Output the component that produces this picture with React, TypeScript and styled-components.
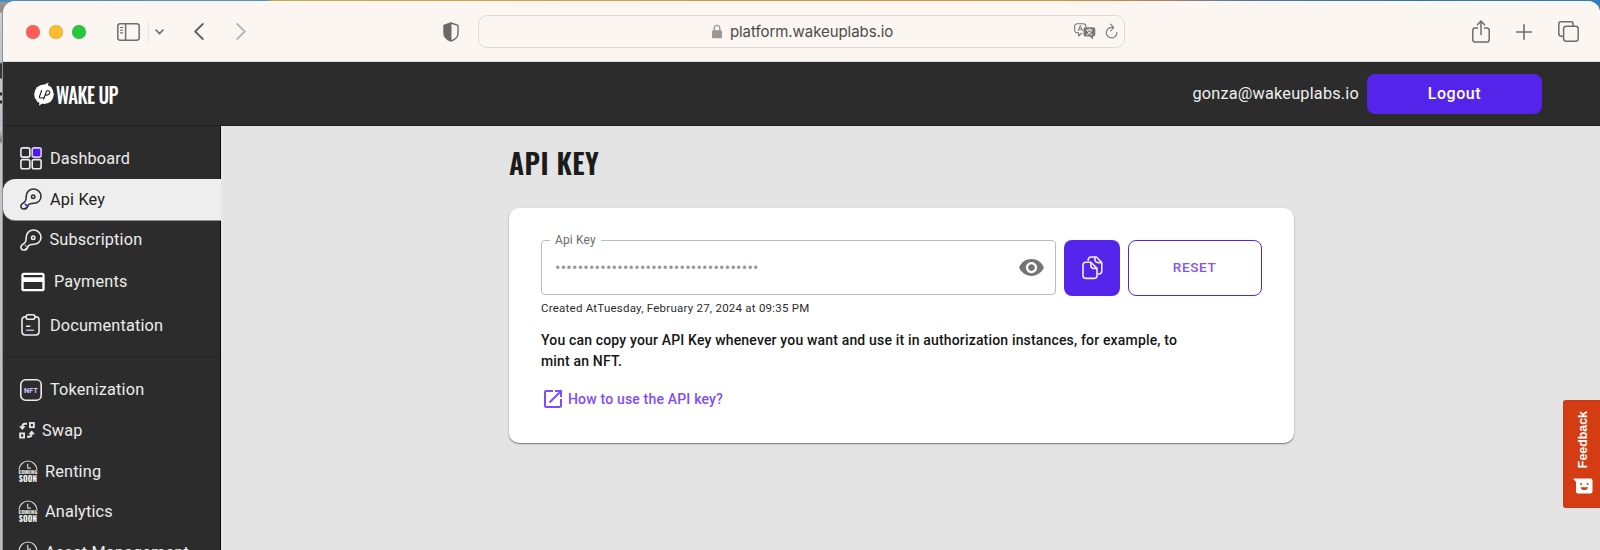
import React from 'react';
import styled, { createGlobalStyle } from 'styled-components';
import { MdVisibility, MdCreditCard, MdOpenInNew } from 'react-icons/md';

const GlobalStyle = createGlobalStyle`
  * { box-sizing: border-box; }
  body { margin: 0; font-family: Roboto, "Liberation Sans", sans-serif; }
  svg { display: block; flex: none; }
`;

const Desktop = styled.div`
  width: 1600px;
  height: 550px;
  overflow: hidden;
  padding: 1px 0 0 3px;
  background:
    linear-gradient(90deg, transparent 2px, #8f9394 2px, #8f9394 3px, transparent 3px) 0 12px / 3px 100% no-repeat,
    linear-gradient(180deg, transparent 2px, #979797 2px, #8c8c8c 12px, #c9cdd2 13px, #bfc4c9 62px, #34373a 64px, #34373a 78px, #c3c6c9 79px, #c3c6c9 92px, #222 93px, #222 95px, #c3c6c9 96px, #c3c6c9 100px, #222 101px, #222 103px, #c3c6c9 104px, #b4c0d2 122px, #c3c6c9 130px, #777 141px, #c3c6c9 144px, #b9bcbf 100%) 0 0 / 12px 100% no-repeat,
    linear-gradient(90deg, #4a8fbb 0, #5494bb 268px, #c3ae52 272px, #cf9f45 560px, #d49440 1060px, #bb8258 1150px, #527aa0 1240px, #2f77ad 1400px, #2f80bd 1600px);
`;

const Window = styled.div`
  width: 1597px;
  height: 549px;
  display: flex;
  flex-direction: column;
  border-radius: 12px 12px 0 0;
  overflow: hidden;
  background: #e4e4e4;
`;

const BrowserBar = styled.div`
  height: 61px;
  flex: none;
  display: flex;
  align-items: center;
  padding: 1px 19px 0 23px;
  background: #fcf6f3;
  border-bottom: 1px solid #d9dcd6;
`;

const Lights = styled.div`
  display: flex;
  gap: 9.2px;
  margin-right: 30.5px;
`;

const Light = styled.span<{ $color: string }>`
  width: 14px;
  height: 14px;
  border-radius: 50%;
  background: ${(p) => p.$color};
  box-shadow: inset 0 0 0 0.5px rgba(0, 0, 0, 0.15);
`;

const BarIcon = styled.span<{ $after?: number }>`
  display: flex;
  margin-right: ${(p) => p.$after ?? 0}px;
`;

const BarDivider = styled.span`
  width: 1px;
  height: 21px;
  margin-right: 6px;
  background: #ebe5e2;
`;

const AddressBar = styled.div`
  width: 647px;
  height: 33px;
  display: flex;
  align-items: center;
  margin-right: 347px;
  padding: 0 6px 0 233px;
  border: 1px solid #dfdad7;
  border-radius: 9px;
`;

const Address = styled.span`
  flex: 1;
  margin-left: 8px;
  font: 400 15px/20px Inter, sans-serif;
  letter-spacing: -0.06px;
  color: #4e4a48;
`;

const Header = styled.header`
  height: 64px;
  flex: none;
  display: flex;
  align-items: center;
  padding: 1px 58px 0 31px;
  background: #2c2c2c;
  border-bottom: 1px solid #212121;
`;

const Brand = styled.div`
  display: flex;
  align-items: center;
  flex: 1;
`;

const BrandName = styled.span`
  display: inline-block;
  margin-left: 1.5px;
  padding-bottom: 1px;
  font: 500 21.5px/24px Oswald, Roboto, sans-serif;
  letter-spacing: -0.6px;
  color: #fff;
  transform: scaleX(0.87);
  transform-origin: left;
  white-space: nowrap;
`;

const Email = styled.span`
  margin-right: 8px;
  padding-bottom: 2px;
  font-size: 16.3px;
  letter-spacing: 0.2px;
  color: #efefef;
`;

const LogoutButton = styled.button`
  width: 175px;
  height: 40px;
  border: 0;
  padding: 0 0 2px;
  border-radius: 8px;
  background: #5424eb;
  color: #fff;
  font: 500 16px Roboto, sans-serif;
  letter-spacing: 0.56px;
`;

const Body = styled.div`
  flex: 1;
  display: flex;
  min-height: 0;
`;

const Sidebar = styled.nav`
  width: 218px;
  flex: none;
  padding-top: 13px;
  background: #2c2c2c;
  border-right: 1px solid #080808;
`;

const NavItem = styled.div<{ $height: number; $left: number; $gap: number; $active?: boolean }>`
  height: ${(p) => p.$height}px;
  display: flex;
  align-items: center;
  gap: ${(p) => p.$gap}px;
  padding-left: ${(p) => p.$left}px;
  padding-bottom: 1px;
  margin-right: ${(p) => (p.$active ? -1 : 0)}px;
  font-size: 16.3px;
  letter-spacing: 0.16px;
  white-space: nowrap;
  color: ${(p) => (p.$active ? '#1c1c1c' : '#ececec')};
  background: ${(p) => (p.$active ? '#eeeeee' : 'transparent')};
  border-radius: 12px 0 0 12px;
  box-shadow: ${(p) => (p.$active ? '0 1px 0 #8e8e8e' : 'none')};
`;

const NavDivider = styled.hr`
  height: 1px;
  margin: 9px 0 13px;
  border: 0;
  background: #252525;
`;

const Main = styled.main`
  flex: 1;
  padding: 16px 0 0 288px;
`;

const Title = styled.h1`
  margin: 0 0 23.5px;
  font: 600 28px/42px Oswald, Roboto, sans-serif;
  letter-spacing: 0.45px;
  color: #1b1b1b;
`;

const Card = styled.section`
  width: 785px;
  height: 235px;
  padding: 32px 32px 0;
  border-radius: 10px;
  background: #fff;
  box-shadow: 0 1px 1.5px rgba(0, 0, 0, 0.5);
`;

const KeyRow = styled.div`
  display: flex;
  gap: 8px;
`;

const Field = styled.fieldset`
  width: 516px;
  height: 61px;
  margin: -6px 0 0;
  padding: 0 10px 0 13px;
  border: 1px solid #bcbcbc;
  border-radius: 4px;
  min-width: 0;
`;

const Legend = styled.legend`
  margin-left: -5px;
  padding: 0 5px 2px;
  font-size: 12px;
  line-height: 12px;
  letter-spacing: 0.15px;
  color: #6b6b6b;
`;

const FieldContent = styled.div`
  height: 39px;
  display: flex;
  align-items: center;
  justify-content: space-between;
`;

const Dots = styled.span`
  font-size: 16px;
  letter-spacing: 0.26px;
  color: #969696;
`;

const CopyButton = styled.button`
  width: 56px;
  height: 56px;
  display: flex;
  align-items: center;
  justify-content: center;
  padding: 1px 0 0;
  border: 0;
  border-radius: 8px;
  background: #5424eb;
`;

const ResetButton = styled.button`
  width: 134px;
  height: 56px;
  padding: 0 1px 1px 0;
  border: 1px solid #5424eb;
  border-radius: 8px;
  background: #fff;
  color: #8455f6;
  font: 500 13.6px Roboto, sans-serif;
  letter-spacing: 0.6px;
`;

const Created = styled.p`
  margin: 3px 0 0;
  font-size: 11.5px;
  line-height: 18px;
  letter-spacing: 0.235px;
  color: #2c2c2c;
`;

const Hint = styled.p`
  width: 650px;
  margin: 13px 0 0;
  font-size: 14px;
  font-weight: 500;
  line-height: 21px;
  letter-spacing: 0.168px;
  color: #151515;
`;

const HelpLink = styled.a`
  display: flex;
  align-items: center;
  gap: 3px;
  margin-top: 15px;
  font-size: 14px;
  font-weight: 500;
  letter-spacing: 0.18px;
  color: #7c4dff;
`;

const FeedbackTab = styled.button`
  position: absolute;
  left: 1563px;
  top: 400px;
  width: 37px;
  height: 108px;
  display: flex;
  flex-direction: column;
  align-items: center;
  gap: 10px;
  padding: 10px 0 0 1px;
  border: 1px solid #c23a17;
  border-right: 0;
  border-radius: 3px 0 0 3px;
  background: #d43c14;
`;

const FeedbackLabel = styled.span`
  writing-mode: vertical-rl;
  transform: rotate(180deg);
  font: 700 12.4px/14px "Liberation Sans", sans-serif;
  color: #fff;
`;

const PanelIcon = () => (
  <svg width="23" height="18" viewBox="0 0 23 18" fill="none" stroke="#726d6a" strokeWidth="1.5">
    <rect x="0.8" y="0.8" width="21.4" height="16.4" rx="2.4" />
    <path d="M8.6 1v16" />
    <path d="M3 4.5h3M3 7.2h3M3 9.9h3" strokeWidth="1.1" />
  </svg>
);

const ChevronIcon = () => (
  <svg width="9" height="6" viewBox="0 0 9 6" fill="none" stroke="#76716e" strokeWidth="1.7" strokeLinecap="round" strokeLinejoin="round">
    <path d="M1 1l3.5 3.6L8 1" />
  </svg>
);

const ArrowIcon = ({ color, flip }: { color: string; flip?: boolean }) => (
  <svg width="10" height="17" viewBox="0 0 10 17" fill="none" stroke={color} strokeWidth="1.8" strokeLinecap="round" strokeLinejoin="round">
    <path d={flip ? 'M1.2 1l7.6 7.5-7.6 7.5' : 'M8.8 1L1.2 8.5l7.6 7.5'} />
  </svg>
);

const ShieldIcon = () => (
  <svg width="16" height="20" viewBox="0 0 16 20">
    <path d="M8 1l7 2.4v8c0 3.6-3 6-7 7.7-4-1.7-7-4.1-7-7.7v-8z" fill="none" stroke="#6d6865" strokeWidth="1.4" strokeLinejoin="round" />
    <path d="M8.5 1v18C4 17.2 1 15 1 11.4v-8z" fill="#6d6865" />
  </svg>
);

const LockIcon = () => (
  <svg width="10" height="15" viewBox="0 0 10 15">
    <path d="M2.2 7V4.2a2.8 2.9 0 0 1 5.6 0V7" fill="none" stroke="#9b9794" strokeWidth="1.3" />
    <rect x="0" y="6.3" width="10" height="8" rx="1.2" fill="#9b9794" />
  </svg>
);

const TranslateIcon = () => (
  <svg width="22" height="17" viewBox="0 0 22 17" fill="none" stroke="#7a7673" strokeLinejoin="round">
    <path d="M8 9.8L4.6 13V9.8H3A2.2 2.2 0 0 1 .7 7.6V3A2.2 2.2 0 0 1 3 .8h6.5A2.2 2.2 0 0 1 11.7 3v1" strokeWidth="1.1" />
    <path d="M4 8l2.3-5.5L8.6 8M4.9 6.2h2.8" strokeWidth="1" />
    <path d="M11.5 4.2h7.8a2 2 0 0 1 2 2v5.4a2 2 0 0 1-2 2h-.4v2.8l-3.2-2.8h-4.2a2 2 0 0 1-2-2V6.2a2 2 0 0 1 2-2z" fill="#7a7673" stroke="none" />
    <path d="M12.3 7h6M15.3 5.6V7M17.3 7c-.5 2.5-2.3 4-4.8 4.9M13.4 7c.5 2.5 2.3 4 4.8 4.9" stroke="#fcf6f3" strokeWidth="1" />
  </svg>
);

const ReloadIcon = () => (
  <svg width="13" height="17" viewBox="0 0 13 17" fill="none" stroke="#827e7b" strokeWidth="1.2" strokeLinecap="round" strokeLinejoin="round">
    <path d="M8.2 4.6A5.3 5.3 0 1 0 11.9 9.3" />
    <path d="M5.6 1.2l3.2 3.4-3.2 3.2" />
  </svg>
);

const ShareIcon = () => (
  <svg width="18" height="24" viewBox="0 0 18 24" fill="none" stroke="#716c69" strokeWidth="1.5" strokeLinecap="round" strokeLinejoin="round">
    <path d="M5.5 8H3A2.2 2.2 0 0 0 .8 10.2v9.6A2.2 2.2 0 0 0 3 22h12a2.2 2.2 0 0 0 2.2-2.2v-9.6A2.2 2.2 0 0 0 15 8h-2.5" />
    <path d="M9 14.5V1.3M5.4 4.7L9 1.1l3.6 3.6" />
  </svg>
);

const PlusIcon = () => (
  <svg width="16" height="16" viewBox="0 0 16 16" stroke="#716c69" strokeWidth="1.6" strokeLinecap="round">
    <path d="M8 .8v14.4M.8 8h14.4" />
  </svg>
);

const TabsIcon = () => (
  <svg width="21" height="21" viewBox="0 0 21 21" fill="none" stroke="#716c69" strokeWidth="1.5">
    <path d="M5.5 15.2H3.2A2.4 2.4 0 0 1 .8 12.8V3.2A2.4 2.4 0 0 1 3.2.8h9.6a2.4 2.4 0 0 1 2.4 2.4v2" />
    <rect x="5.6" y="5.2" width="14.6" height="15" rx="2.6" />
  </svg>
);

const LogoMark = () => (
  <svg width="20" height="24" viewBox="0 0 20 24">
    <circle cx="10" cy="12.2" r="9.8" fill="#fff" />
    <path d="M9 3.5L14.5.4l-.6 3.4 2.8.9-4 2zM9.5 20.5L5 23.7l.6-3.6z" fill="#fff" />
    <path d="M7.6 8.5l-2 5.8c-.4 1.2.2 1.7 1 1.7 1 0 1.6-.5 3.6-.5M9.6 17.2l3.1-8.4h1.5c1.6 0 1.9 1.1 1.5 2.2-.4 1.2-1.3 2.1-2.7 2.1h-1.5" fill="none" stroke="#222" strokeWidth="1.1" strokeLinecap="round" strokeLinejoin="round" />
  </svg>
);

const DashboardIcon = () => (
  <svg width="22" height="23" viewBox="0 0 22 23" fill="none" stroke="#ececec" strokeWidth="1.6">
    <rect x="0.9" y="0.9" width="8.9" height="9.2" rx="1.9" />
    <rect x="12.2" y="0.9" width="8.9" height="9.2" rx="1.9" fill="#4d19f5" stroke="#d9cffb" />
    <rect x="0.9" y="12.6" width="8.9" height="9.2" rx="1.9" />
    <rect x="12.2" y="12.6" width="8.9" height="9.2" rx="1.9" />
  </svg>
);

const KeyIcon = ({ color, tick }: { color: string; tick: string }) => (
  <svg width="22" height="22" viewBox="0 0 22 22" fill="none" stroke={color} strokeWidth="1.6" strokeLinejoin="round">
    <path d="M6.2 8.5C6.2 4.2 9.5 1 13.5 1S21 4.2 21 8.2s-3.1 7.1-7 7.1c-3 0-5.2.3-6 2.3C7.5 19 6.8 21 4 21 1.2 21 .2 18.5 1.4 16.8c.9-1.3 2.9-2.2 4-4C6.2 11.3 6.2 9.8 6.2 8.5z" />
    <circle cx="13.2" cy="8.7" r="1.7" strokeWidth="1.6" />
    <path d="M4.8 15.6c.6 1.1 1.3 1.7 2.3 2" stroke={tick} strokeWidth="1.7" />
  </svg>
);

const ClipboardIcon = () => (
  <svg width="19" height="22" viewBox="0 0 19 22" fill="none" stroke="#ececec" strokeWidth="1.6" strokeLinecap="round">
    <path d="M5 2.8H4.2A3.2 3.2 0 0 0 1 6v11.8A3.2 3.2 0 0 0 4.2 21h10.6a3.2 3.2 0 0 0 3.2-3.2V6a3.2 3.2 0 0 0-3.2-3.2H14" />
    <rect x="5.1" y="0.8" width="8.8" height="4.4" rx="2" />
    <path d="M5.6 12.3h3.2" />
    <path d="M5.6 16.3h7" stroke="#b5a9e2" />
  </svg>
);

const NftIcon = () => (
  <svg width="22" height="22" viewBox="0 0 22 22">
    <rect x="0.8" y="0.8" width="20.4" height="20.4" rx="4.8" fill="none" stroke="#ececec" strokeWidth="1.6" />
    <text x="4" y="13.5" textLength="14" lengthAdjust="spacingAndGlyphs" fontFamily="Inter" fontWeight="800" fontSize="6.8" fill="#c8bbf9">NFT</text>
  </svg>
);

const SwapIcon = () => (
  <svg width="16" height="17" viewBox="0 0 16 17" fill="none" stroke="#e6e6e6" strokeWidth="1.8">
    <rect x="10.9" y="1" width="4" height="4.2" />
    <rect x="1.1" y="11.4" width="4" height="4.2" />
    <path d="M8 1.8H5.8Q3.5 1.8 3.3 5" strokeWidth="2" />
    <path d="M0 4.3h6.6L3.3 8z" fill="#e6e6e6" stroke="none" />
    <path d="M8 14.8h2.2Q12.5 14.8 12.7 11.5" strokeWidth="2" />
    <path d="M9.4 12.3h6.6L12.7 8.6z" fill="#e6e6e6" stroke="none" />
  </svg>
);

const SoonIcon = () => (
  <svg width="20" height="23" viewBox="0 0 20 23">
    <path d="M1 9.6C1.6 4.7 5.3 1 10 1s8.4 3.7 9 8.6" fill="none" stroke="#d2d2d2" strokeWidth="1.2" />
    <path d="M9.7 3.8v4.3h3.3" fill="none" stroke="#d2d2d2" strokeWidth="1.2" />
    <text x="0.5" y="14.3" textLength="19" lengthAdjust="spacingAndGlyphs" fontFamily="Oswald, Roboto" fontWeight="700" fontSize="5" fill="#ececec">COMING</text>
    <text x="0.8" y="22.3" textLength="18.4" lengthAdjust="spacingAndGlyphs" fontFamily="Oswald, Roboto" fontWeight="700" fontSize="8.6" fill="#f4f4f4">SOON</text>
  </svg>
);

const CopyIcon = () => (
  <svg width="21" height="23.5" viewBox="0 0 21 23.5" fill="none" stroke="#f1edfe" strokeWidth="1.6" strokeLinejoin="round">
    <path d="M6.2 4.8V4A3 3 0 0 1 9.2 1h5.2l5.4 5.6v8.4a3 3 0 0 1-3 3h-1.3" />
    <path d="M12.9 1v2.6a3 3 0 0 0 3 3h3.9" />
    <path d="M8.9 6.2H4A3 3 0 0 0 1 9.2v10.2a3 3 0 0 0 3 3h8a3 3 0 0 0 3-3v-7z" />
    <path d="M8.9 6.2v3.2a3 3 0 0 0 3 3H15" />
  </svg>
);

const SmileIcon = () => (
  <svg width="20" height="16" viewBox="0 0 20 16">
    <path d="M0 .5h17.5A2 2 0 0 1 19.5 2.5v11a2 2 0 0 1-2 2H5a2 2 0 0 1-2-2V4z" fill="#fff" />
    <circle cx="8" cy="6" r="1" fill="#d43c14" />
    <circle cx="14.6" cy="6" r="1" fill="#d43c14" />
    <path d="M7.6 9.2h7.4c-.4 1.9-1.8 2.9-3.7 2.9s-3.3-1-3.7-2.9z" fill="#d43c14" />
  </svg>
);

export default function App() {
  return (
    <>
      <GlobalStyle />
      <Desktop>
        <Window>
          <BrowserBar>
            <Lights>
              <Light $color="#fe5e56" />
              <Light $color="#febc2e" />
              <Light $color="#27c840" />
            </Lights>
            <BarIcon $after={8}><PanelIcon /></BarIcon>
            <BarDivider />
            <BarIcon $after={30}><ChevronIcon /></BarIcon>
            <BarIcon $after={32}><ArrowIcon color="#65605d" /></BarIcon>
            <BarIcon $after={197}><ArrowIcon color="#b9b4b1" flip /></BarIcon>
            <BarIcon $after={19}><ShieldIcon /></BarIcon>
            <AddressBar>
              <LockIcon />
              <Address>platform.wakeuplabs.io</Address>
              <BarIcon $after={9}><TranslateIcon /></BarIcon>
              <ReloadIcon />
            </AddressBar>
            <BarIcon $after={26}><ShareIcon /></BarIcon>
            <BarIcon $after={26}><PlusIcon /></BarIcon>
            <TabsIcon />
          </BrowserBar>

          <Header>
            <Brand>
              <LogoMark />
              <BrandName>WAKE UP</BrandName>
            </Brand>
            <Email>gonza@wakeuplabs.io</Email>
            <LogoutButton>Logout</LogoutButton>
          </Header>

          <Body>
            <Sidebar>
              <NavItem $height={40} $left={17} $gap={8}><DashboardIcon />Dashboard</NavItem>
              <NavItem $height={41} $left={17} $gap={8} $active><KeyIcon color="#333" tick="#5424eb" />Api Key</NavItem>
              <NavItem $height={40} $left={17} $gap={7.5}><KeyIcon color="#ececec" tick="#8b7bd0" />Subscription</NavItem>
              <NavItem $height={44} $left={16} $gap={7}><MdCreditCard size={28} color="#fff" />Payments</NavItem>
              <NavItem $height={43} $left={18} $gap={10}><ClipboardIcon />Documentation</NavItem>
              <NavDivider />
              <NavItem $height={40} $left={17} $gap={8}><NftIcon />Tokenization</NavItem>
              <NavItem $height={41} $left={15.5} $gap={7.5}><SwapIcon />Swap</NavItem>
              <NavItem $height={41} $left={15} $gap={7}><SoonIcon />Renting</NavItem>
              <NavItem $height={40} $left={15} $gap={7}><SoonIcon />Analytics</NavItem>
              <NavItem $height={41} $left={15} $gap={7}><SoonIcon />Asset Management</NavItem>
            </Sidebar>

            <Main>
              <Title>API KEY</Title>
              <Card>
                <KeyRow>
                  <Field>
                    <Legend>Api Key</Legend>
                    <FieldContent>
                      <Dots>{'•'.repeat(36)}</Dots>
                      <MdVisibility size={27} color="#757575" />
                    </FieldContent>
                  </Field>
                  <CopyButton><CopyIcon /></CopyButton>
                  <ResetButton>RESET</ResetButton>
                </KeyRow>
                <Created>Created AtTuesday, February 27, 2024 at 09:35 PM</Created>
                <Hint>
                  You can copy your API Key whenever you want and use it in authorization instances, for example, to
                  mint an NFT.
                </Hint>
                <HelpLink>
                  <MdOpenInNew size={24} />
                  How to use the API key?
                </HelpLink>
              </Card>
            </Main>
          </Body>
        </Window>
        <FeedbackTab>
          <FeedbackLabel>Feedback</FeedbackLabel>
          <SmileIcon />
        </FeedbackTab>
      </Desktop>
    </>
  );
}
